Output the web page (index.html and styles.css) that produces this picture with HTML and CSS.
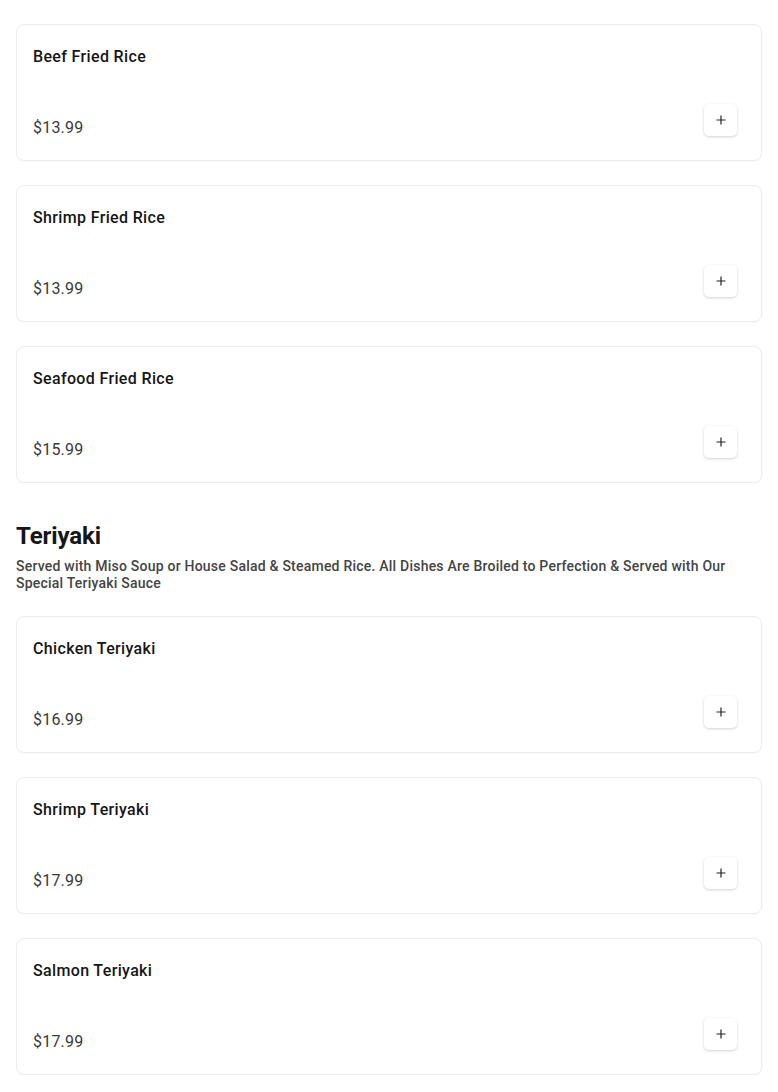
FILE: index.html
```html
<!DOCTYPE html>
<html>
<head>
<meta charset="utf-8">
<link rel="stylesheet" href="styles.css">
</head>
<body>
<div class="page">
  <div class="list">
    <div class="card"><div class="title">Beef Fried Rice</div><div class="row"><span class="price">$13.99</span><button class="add"><svg width="12" height="12" viewBox="0 0 12 12"><path d="M6 1.5v9M1.5 6h9" stroke="#222" stroke-width="1.2"/></svg></button></div></div>
    <div class="card"><div class="title">Shrimp Fried Rice</div><div class="row"><span class="price">$13.99</span><button class="add"><svg width="12" height="12" viewBox="0 0 12 12"><path d="M6 1.5v9M1.5 6h9" stroke="#222" stroke-width="1.2"/></svg></button></div></div>
    <div class="card"><div class="title">Seafood Fried Rice</div><div class="row"><span class="price">$15.99</span><button class="add"><svg width="12" height="12" viewBox="0 0 12 12"><path d="M6 1.5v9M1.5 6h9" stroke="#222" stroke-width="1.2"/></svg></button></div></div>
  </div>
  <section class="section">
    <h2 class="heading">Teriyaki</h2>
    <p class="desc">Served with Miso Soup or House Salad &amp; Steamed Rice. All Dishes Are Broiled to Perfection &amp; Served with Our Special Teriyaki Sauce</p>
    <div class="list">
      <div class="card"><div class="title">Chicken Teriyaki</div><div class="row"><span class="price">$16.99</span><button class="add"><svg width="12" height="12" viewBox="0 0 12 12"><path d="M6 1.5v9M1.5 6h9" stroke="#222" stroke-width="1.2"/></svg></button></div></div>
      <div class="card"><div class="title">Shrimp Teriyaki</div><div class="row"><span class="price">$17.99</span><button class="add"><svg width="12" height="12" viewBox="0 0 12 12"><path d="M6 1.5v9M1.5 6h9" stroke="#222" stroke-width="1.2"/></svg></button></div></div>
      <div class="card"><div class="title">Salmon Teriyaki</div><div class="row"><span class="price">$17.99</span><button class="add"><svg width="12" height="12" viewBox="0 0 12 12"><path d="M6 1.5v9M1.5 6h9" stroke="#222" stroke-width="1.2"/></svg></button></div></div>
    </div>
  </section>
</div>
</body>
</html>
```
FILE: styles.css
```css
* { box-sizing: border-box; }
html, body { margin: 0; padding: 0; background: #fff; }
body { font-family: Roboto, "Liberation Sans", Arial, sans-serif; color: #1a1a1a; }
.page { padding: 24px 16px 0 16px; }
.list { display: flex; flex-direction: column; gap: 24px; }
.card {
  height: 137px;
  border: 1px solid #ececec;
  border-radius: 8px;
  background: #fff;
  padding: 20px 24px 20px 16px;
  display: flex;
  flex-direction: column;
  justify-content: space-between;
  box-shadow: 0 1px 2px rgba(0,0,0,0.03);
}
.title { font-size: 16px; line-height: 24px; font-weight: 500; color: #161616; letter-spacing: 0.35px; }
.row { display: flex; justify-content: space-between; align-items: flex-start; }
.price { font-size: 16px; line-height: 24px; padding-top: 11px; color: #3a3a3a; letter-spacing: 0.2px; }
.add {
  width: 33px; height: 32px;
  border: none; border-radius: 5px;
  background: #fff;
  box-shadow: 0 1px 3px rgba(0,0,0,0.18);
  display: flex; align-items: center; justify-content: center;
  padding: 0; cursor: pointer;
  margin-top: -1px;
}
.section { padding-top: 37px; }
.heading { margin: 0; font-size: 24px; line-height: 32px; font-weight: 700; color: #161616; letter-spacing: -0.1px; }
.desc { margin: 6px 0 24px 0; font-size: 14px; line-height: 17px; font-weight: 500; color: #444; letter-spacing: 0.22px; }
```
